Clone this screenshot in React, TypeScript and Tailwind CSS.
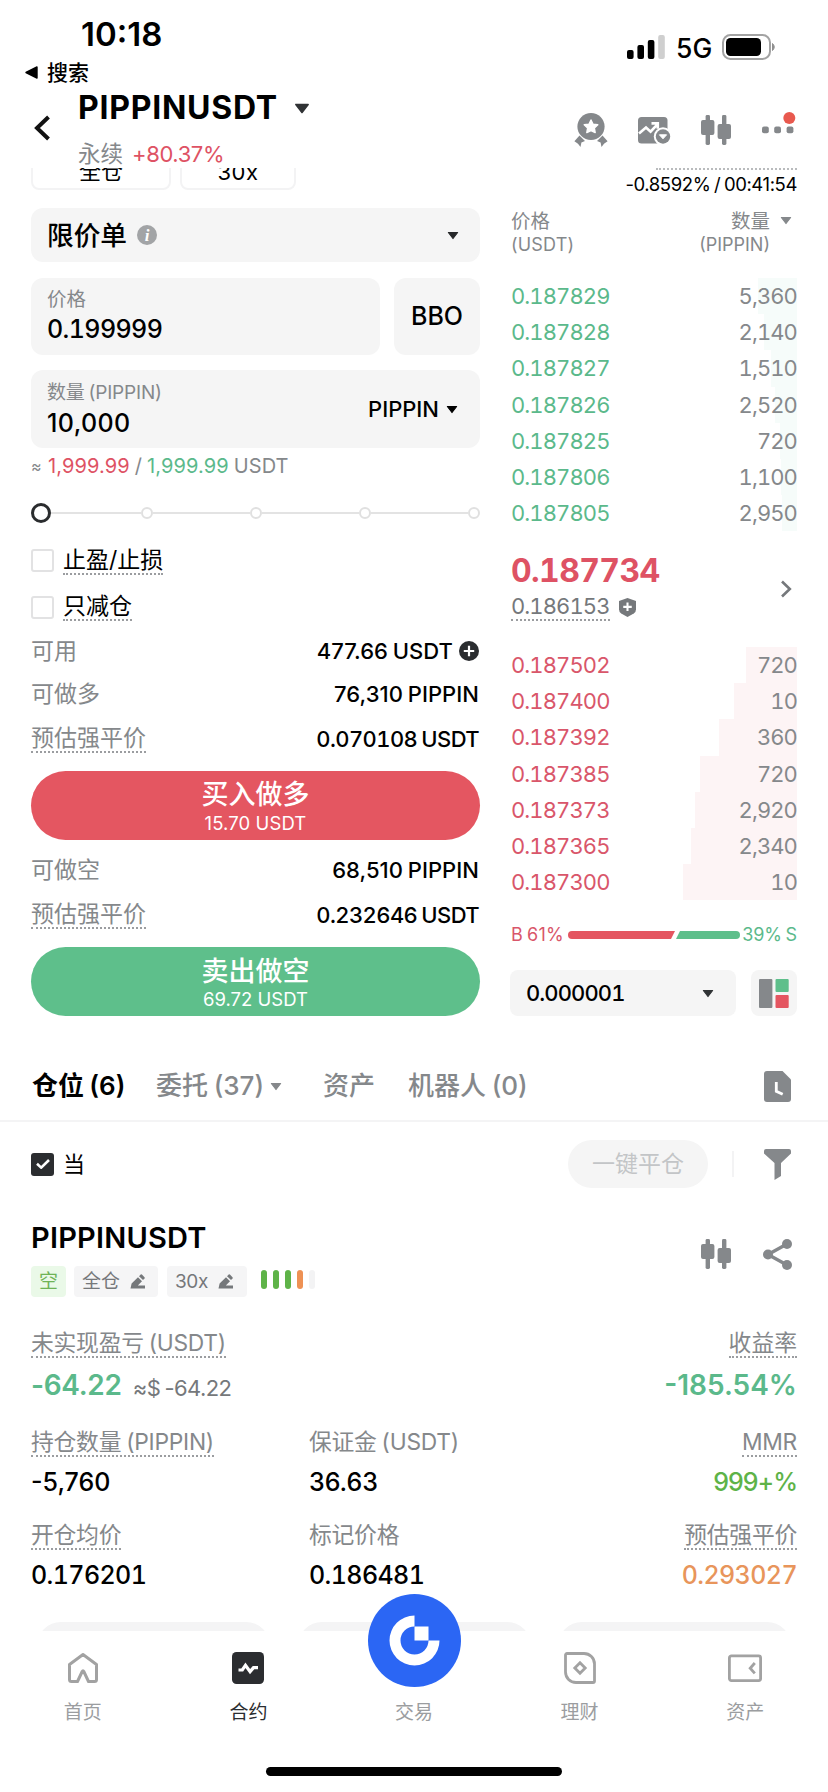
import type { ReactNode } from "react"
import clsx from "clsx"

type BookRow = { price: string; amount: string; depth: number }

const asks: BookRow[] = [
  { price: "0.187829", amount: "5,360", depth: 39 },
  { price: "0.187828", amount: "2,140", depth: 33 },
  { price: "0.187827", amount: "1,510", depth: 26 },
  { price: "0.187826", amount: "2,520", depth: 22 },
  { price: "0.187825", amount: "720", depth: 17 },
  { price: "0.187806", amount: "1,100", depth: 16 },
  { price: "0.187805", amount: "2,950", depth: 15 },
]

const bids: BookRow[] = [
  { price: "0.187502", amount: "720", depth: 51 },
  { price: "0.187400", amount: "10", depth: 63 },
  { price: "0.187392", amount: "360", depth: 78 },
  { price: "0.187385", amount: "720", depth: 97 },
  { price: "0.187373", amount: "2,920", depth: 102 },
  { price: "0.187365", amount: "2,340", depth: 106 },
  { price: "0.187300", amount: "10", depth: 114 },
]

function Caret({ className }: { className?: string }) {
  return (
    <svg viewBox="0 0 12 8" className={clsx("shrink-0", className)}>
      <path
        d="M1.4 1h9.2L6 7z"
        fill="currentColor"
        stroke="currentColor"
        strokeWidth="1.2"
        strokeLinejoin="round"
      />
    </svg>
  )
}

function Dotted({ children, className }: { children: ReactNode; className?: string }) {
  return (
    <span
      className={clsx(
        "inline-block border-b-2 border-dotted border-[#9b9da0] leading-[26px] whitespace-nowrap",
        className
      )}
    >
      {children}
    </span>
  )
}

function CandlesIcon() {
  return (
    <svg viewBox="0 0 30 30" className="h-[30px] w-[30px]" fill="#85888b">
      <rect x="4.6" y="0" width="4.4" height="30" rx="1.4" />
      <rect x="0" y="5" width="13.4" height="15" rx="2" />
      <rect x="21" y="0" width="4.4" height="30" rx="1.4" />
      <rect x="16.6" y="9" width="13.4" height="15" rx="2" />
    </svg>
  )
}

function EditIcon() {
  return (
    <svg viewBox="0 0 16 15" className="h-[15px] w-[16px]" fill="#75787b">
      <path d="M0.5 14.5L1.6 9.6 8 3.2l4 4-4.2 4.2H15v3.1z" />
      <path d="M9 2.2l1.7-1.6q.6-.5 1.2 0l2.6 2.6q.5.6 0 1.2L13 6.1z" />
    </svg>
  )
}

function StatusBar() {
  return (
    <div className="flex h-[88px] justify-between">
      <div className="flex flex-col">
        <span className="mt-[13px] ml-[81px] h-[43px] text-[33px] leading-[42px] font-semibold">
          10:18
        </span>
        <div className="ml-[25px] flex h-[32px] items-center gap-[9px]">
          <svg viewBox="0 0 13 13" className="h-[13px] w-[13px]">
            <path d="M12 1v11L1 6.5z" stroke="#000" strokeWidth="1.4" strokeLinejoin="round" />
          </svg>
          <span className="text-[21px] leading-none font-medium">搜索</span>
        </div>
      </div>
      <div className="mt-[34px] mr-[52px] flex h-[26px] items-center">
        <svg viewBox="0 0 38 24" className="h-[24px] w-[38px]">
          <rect x="0" y="15" width="6.6" height="9" rx="2" />
          <rect x="10.4" y="10" width="6.6" height="14" rx="2" />
          <rect x="20.8" y="5" width="6.6" height="19" rx="2" />
          <rect x="31.2" y="0" width="6.6" height="24" rx="2" fill="#cfcfcf" />
        </svg>
        <span className="ml-[11px] w-[46px] pt-[2px] text-[26.5px] leading-none font-medium">
          5G
        </span>
        <svg viewBox="0 0 54 26" className="h-[26px] w-[54px]">
          <rect x="1" y="1" width="47" height="24" rx="7.5" fill="none" stroke="#a3a3a3" strokeWidth="2" />
          <rect x="4" y="4" width="35" height="18" rx="4.5" />
          <path d="M50.5 9.5q3.5 3.5 0 7z" fill="#8f8f8f" stroke="#8f8f8f" />
        </svg>
      </div>
    </div>
  )
}

function Header() {
  return (
    <header className="flex h-[80px] justify-between">
      <div className="flex">
        <svg viewBox="0 0 18 26" className="mt-[27px] ml-[33px] h-[26px] w-[18px]">
          <path d="M15.5 2L4 13l11.5 11" fill="none" stroke="#111" strokeWidth="4" />
        </svg>
        <div className="ml-[27px]">
          <div className="flex h-[40px] items-center gap-[16px]">
            <h1 className="w-[200px] text-[32px] leading-none font-bold tracking-[0.75px]">
              PIPPINUSDT
            </h1>
            <Caret className="h-[11px] w-[16px] text-[#303335]" />
          </div>
          <div className="mt-[12px] flex h-[28px] items-center gap-[9px] text-[22px] leading-none">
            <span className="text-[22.5px] text-[#85888b]">永续</span>
            <span className="tracking-[-0.4px] text-[#de5264]">+80.37%</span>
          </div>
        </div>
      </div>

      <div className="flex">
        <svg viewBox="0 0 34 36" className="mt-[24px] mr-[30px] h-[36px] w-[34px]" fill="#85888b">
          <path d="M5.5 23.5L11 29l-3.6 1.6-.9 4.3-2.5-3.2-3.6-2.4zM28.5 23.5L23 29l3.6 1.6.9 4.3 2.5-3.2 3.6-2.4z" />
          <circle cx="17" cy="14.5" r="13.6" />
          <path
            d="M17 8l2.1 4.2 4.7.6-3.4 3.2.8 4.6-4.2-2.1-4.2 2.1.8-4.6-3.4-3.2 4.7-.6z"
            fill="#fff"
            stroke="#fff"
            strokeWidth="1.4"
            strokeLinejoin="round"
          />
        </svg>
        <svg viewBox="0 0 33 28" className="mt-[28px] mr-[30px] h-[28px] w-[33px]">
          <rect x="0" y="1" width="29.5" height="26.5" rx="3.5" fill="#85888b" />
          <path
            d="M1 17.5l7-6 4.6 4.2 6.8-7.4M13.5 7.4h6.3v5.4"
            fill="none"
            stroke="#fff"
            strokeWidth="2.6"
          />
          <circle cx="25" cy="20.5" r="9.2" fill="#fff" />
          <circle cx="25" cy="20.5" r="7.2" fill="#85888b" />
          <path d="M21.4 18.8h7.2L25 22.8z" fill="#fff" stroke="#fff" strokeLinejoin="round" />
        </svg>
        <div className="mt-[27px] mr-[31px]">
          <CandlesIcon />
        </div>
        <svg viewBox="0 0 34 24" className="mt-[24px] mr-[32px] h-[24px] w-[34px]" fill="#85888b">
          <rect x="0" y="14.5" width="6.8" height="6.8" rx="2" />
          <rect x="12.2" y="14.5" width="6.8" height="6.8" rx="2" />
          <rect x="24.6" y="14.5" width="6.8" height="6.8" rx="2" />
          <circle cx="27.3" cy="6" r="6" fill="#e8594e" />
        </svg>
      </div>
    </header>
  )
}

function InfoRow({
  label,
  value,
  price,
  plus,
  className,
}: {
  label: string
  value: string
  price?: boolean
  plus?: boolean
  className?: string
}) {
  return (
    <div className={clsx("flex items-center justify-between", className)}>
      {price ? (
        <Dotted className="text-[23px] text-[#85888b]">{label}</Dotted>
      ) : (
        <span className="text-[23px] leading-none text-[#85888b]">{label}</span>
      )}
      <span
        className={clsx(
          "flex items-center gap-[6px] pr-[1px] text-[22px] leading-none font-medium",
          price ? "tracking-[-0.6px] tabular-nums" : "tracking-[0.05px]"
        )}
      >
        {value}
        {plus && (
          <svg viewBox="0 0 20 20" className="h-[20px] w-[20px]">
            <circle cx="10" cy="10" r="10" fill="#2b2d30" />
            <path d="M10 4.8v10.4M4.8 10h10.4" stroke="#fff" strokeWidth="2.2" />
          </svg>
        )}
      </span>
    </div>
  )
}

function OrderForm() {
  return (
    <section className="w-[449px]">
      <div className="flex h-[22px] items-end gap-[9px] overflow-hidden text-[22px] leading-none">
        <div className="flex h-[42px] w-[140px] shrink-0 items-center justify-center rounded-[8px] border-2 border-[#f3f3f4]">
          <span className="pt-[4px]">全仓</span>
        </div>
        <div className="flex h-[42px] w-[116px] shrink-0 items-center justify-center rounded-[8px] border-2 border-[#f3f3f4]">
          <span className="pt-[5px] tracking-[0.5px]">30x</span>
        </div>
      </div>

      <div className="mt-[18px] flex h-[54px] items-center rounded-[12px] bg-[#f5f5f5] pr-[21px] pl-[16px]">
        <span className="text-[26.7px] leading-none font-medium">限价单</span>
        <span className="ml-[10px] flex h-[20px] w-[20px] items-center justify-center rounded-full bg-[#a2a4a6] font-['Liberation_Serif',serif] text-[17px] leading-none font-bold text-white italic">
          i
        </span>
        <Caret className="ml-auto h-[9px] w-[12px] text-[#26282a]" />
      </div>

      <div className="mt-[16px] flex gap-[14px]">
        <div className="flex h-[77px] w-[349px] flex-col rounded-[12px] bg-[#f5f5f5] pt-[7px] pl-[16px]">
          <span className="h-[28px] text-[19.5px] leading-[28px] text-[#85888b]">价格</span>
          <span className="h-[32px] text-[25px] leading-[32px] font-medium tracking-[-0.6px] tabular-nums">
            0.199999
          </span>
        </div>
        <div className="flex h-[77px] w-[86px] items-center justify-center rounded-[12px] bg-[#f5f5f5] text-[25px] font-medium">
          BBO
        </div>
      </div>

      <div className="mt-[15px] flex h-[78px] items-center justify-between rounded-[12px] bg-[#f5f5f5] pr-[22px] pl-[16px]">
        <div className="flex flex-col">
          <span className="h-[28px] text-[19px] leading-[28px] tracking-[-0.2px] text-[#85888b]">数量 (PIPPIN)</span>
          <span className="h-[32px] text-[25px] leading-[32px] font-medium tracking-[0.4px]">10,000</span>
        </div>
        <div className="flex items-center gap-[7px] text-[22px] leading-none font-medium">
          PIPPIN
          <Caret className="h-[9px] w-[12px]" />
        </div>
      </div>

      <p className="flex h-[36px] items-center gap-[5px] text-[20px] leading-none tracking-[0.1px] text-[#85888b]">
        <span className="w-[12px] text-[16px]">≈</span>
        <span className="text-[#de5264]">1,999.99</span>
        <span>/</span>
        <span className="text-[#5bb98b]">1,999.99</span>
        <span>USDT</span>
      </p>

      <div className="flex h-[58px] items-center">
        <i className="h-[20px] w-[20px] rounded-full border-[3px] border-[#2a2c2e]" />
        <i className="h-[2px] w-[90px] bg-[#e3e3e3]" />
        <i className="h-[12px] w-[12px] rounded-full border-2 border-[#e0e0e0]" />
        <i className="h-[2px] flex-1 bg-[#e3e3e3]" />
        <i className="h-[12px] w-[12px] rounded-full border-2 border-[#e0e0e0]" />
        <i className="h-[2px] flex-1 bg-[#e3e3e3]" />
        <i className="h-[12px] w-[12px] rounded-full border-2 border-[#e0e0e0]" />
        <i className="h-[2px] flex-1 bg-[#e3e3e3]" />
        <i className="h-[12px] w-[12px] rounded-full border-2 border-[#e0e0e0]" />
      </div>

      <label className="flex h-[37px] items-center gap-[9px]">
        <span className="h-[23px] w-[23px] rounded-[3px] border-2 border-[#e2e2e3]" />
        <Dotted className="text-[23px]">止盈/止损</Dotted>
      </label>
      <label className="flex h-[56px] items-center gap-[9px]">
        <span className="h-[23px] w-[23px] rounded-[3px] border-2 border-[#e2e2e3]" />
        <Dotted className="text-[23px]">只减仓</Dotted>
      </label>

      <InfoRow label="可用" value="477.66 USDT" plus className="h-[32px]" />
      <InfoRow label="可做多" value="76,310 PIPPIN" className="h-[54px]" />
      <InfoRow label="预估强平价" value="0.070108 USDT" price className="h-[36px]" />

      <button className="mt-[14px] flex h-[69px] w-full flex-col items-center rounded-full bg-[#e45661] pt-[8px] text-white">
        <span className="h-[32px] text-[27px] leading-[32px] font-medium">买入做多</span>
        <span className="h-[24px] text-[18.5px] leading-[24px] tracking-[0.1px]">15.70 USDT</span>
      </button>

      <InfoRow label="可做空" value="68,510 PIPPIN" className="h-[60px]" />
      <InfoRow label="预估强平价" value="0.232646 USDT" price className="h-[30px]" />

      <button className="mt-[17px] flex h-[69px] w-full flex-col items-center rounded-full bg-[#5ebf8b] pt-[9px] text-white">
        <span className="h-[31px] text-[27px] leading-[31px] font-medium">卖出做空</span>
        <span className="h-[24px] text-[18.5px] leading-[24px]">69.72 USDT</span>
      </button>
    </section>
  )
}

function Book({ rows, side }: { rows: BookRow[]; side: "ask" | "bid" }) {
  return (
    <ul className="h-[253px]">
      {rows.map((row) => (
        <li
          key={row.price}
          className="flex h-[36.2px] items-center justify-between text-[22px] leading-none tracking-[-0.9px] tabular-nums"
        >
          <span className={side === "ask" ? "text-[#5bb98b]" : "text-[#d9566a]"}>{row.price}</span>
          <span
            className={clsx(
              "flex h-full items-center justify-end text-[#85888b]",
              side === "ask" ? "bg-[#f6fcfa]" : "bg-[#fdf4f5]"
            )}
            style={{ width: row.depth }}
          >
            {row.amount}
          </span>
        </li>
      ))}
    </ul>
  )
}

function OrderBook() {
  return (
    <section className="ml-[31px] w-[286px]">
      <div className="ml-auto w-[141px] border-t-2 border-dotted border-[#b9bbbd]" />
      <div className="flex h-[29px] items-center justify-end text-[18.5px] leading-none tracking-[-0.4px] whitespace-nowrap">
        -0.8592% / 00:41:54
      </div>
      <div className="mt-[11px] flex h-[46px] justify-between text-[18px] text-[#85888b]">
        <div className="flex flex-col leading-[23px]">
          <span className="text-[19.5px]">价格</span>
          <span className="tracking-[0.2px]">(USDT)</span>
        </div>
        <div className="flex">
          <div className="flex flex-col text-right leading-[23px]">
            <span className="text-[19.5px]">数量</span>
            <span>(PIPPIN)</span>
          </div>
          <Caret className="mt-[6px] mr-[5px] ml-[10px] h-[9px] w-[12px]" />
        </div>
      </div>

      <div className="mt-[22px]">
        <Book rows={asks} side="ask" />
      </div>

      <div className="flex h-[116px] items-center justify-between pr-[5px]">
        <div>
          <div className="h-[36px] text-[32px] leading-[36px] font-bold tracking-[-0.6px] text-[#de5264] tabular-nums">
            0.187734
          </div>
          <div className="flex h-[37px] items-center gap-[9px]">
            <Dotted className="text-[22px] tracking-[-0.9px] text-[#75787b] tabular-nums">0.186153</Dotted>
            <svg viewBox="0 0 18 20" className="h-[19px] w-[17px]">
              <path d="M9 0l9 3.2v8.6q0 3-2.4 4.6L9 20l-6.6-3.6Q0 14.8 0 11.8V3.2z" fill="#75787b" />
              <path d="M9 4.8v9M4.5 9.3h9" stroke="#fff" strokeWidth="2.2" />
            </svg>
          </div>
        </div>
        <svg viewBox="0 0 12 18" className="h-[18px] w-[12px]">
          <path d="M2 1.5L9.8 9 2 16.5" fill="none" stroke="#75787b" strokeWidth="2.6" />
        </svg>
      </div>

      <Book rows={bids} side="bid" />

      <div className="mt-[17px] flex h-[36px] items-center text-[18px] leading-none whitespace-nowrap">
        <span className="w-[57px] tracking-[0.2px] text-[#d9566a]">B 61%</span>
        <svg viewBox="0 0 172 8" className="h-[8px] w-[172px]">
          <path d="M4 0h103l-4 8H4a4 4 0 010-8z" fill="#e45661" />
          <path d="M112 0h56a4 4 0 010 8h-60z" fill="#5ebf8b" />
        </svg>
        <span className="ml-auto tracking-[-0.1px] text-[#5bb98b]">39% S</span>
      </div>

      <div className="mt-[17px] flex justify-between">
        <div className="-ml-px flex h-[46px] w-[226px] items-center justify-between rounded-[8px] bg-[#f5f5f5] pr-[22px] pl-[16px] text-[22px] font-medium tracking-[-0.9px] tabular-nums">
          0.000001
          <Caret className="h-[9px] w-[12px] text-[#303335]" />
        </div>
        <div className="flex h-[46px] w-[46px] items-center justify-center rounded-[8px] bg-[#f5f5f5]">
          <svg viewBox="0 0 30 29" className="h-[29px] w-[30px]">
            <rect width="13.4" height="29" rx="1" fill="#85888b" />
            <rect x="16.5" width="13.2" height="13" rx="1" fill="#5ebf8b" />
            <rect x="16.5" y="16" width="13.2" height="13" rx="1" fill="#e45661" />
          </svg>
        </div>
      </div>
    </section>
  )
}

function Tabs() {
  return (
    <nav className="mt-[36px] flex h-[70px] items-center border-b-2 border-[#f4f4f5] pr-[37px] pl-[32px] text-[26px] leading-none font-medium text-[#85888b]">
      <span className="w-[124px] font-semibold text-black">仓位 (6)</span>
      <span className="flex w-[167px] items-center gap-[6px]">
        委托 (37)
        <Caret className="h-[9px] w-[12px]" />
      </span>
      <span className="w-[85px]">资产</span>
      <span>机器人 (0)</span>
      <svg viewBox="0 0 27 31" className="ml-auto h-[31px] w-[27px]">
        <path d="M3 0h15.5L27 8.5V28a3 3 0 01-3 3H3a3 3 0 01-3-3V3a3 3 0 013-3z" fill="#85888b" />
        <path d="M12.3 11v9.3l6.4 3" fill="none" stroke="#fff" strokeWidth="2.8" />
      </svg>
    </nav>
  )
}

function Stat({
  label,
  value,
  dotted,
  right,
  className,
}: {
  label: string
  value: string
  dotted?: boolean
  right?: boolean
  className?: string
}) {
  return (
    <div className={right ? "flex-1 text-right" : "w-[278px]"}>
      <div className="h-[28px] text-[#85888b]">
        <Dotted className={clsx("text-[22.8px] tracking-[-0.25px]", !dotted && "border-transparent")}>
          {label}
        </Dotted>
      </div>
      <div className={clsx("mt-[7px] h-[36px] text-[25px] leading-[36px] font-medium", className)}>
        {value}
      </div>
    </div>
  )
}

function Position() {
  return (
    <section className="pr-[31px] pl-[31px]">
      <div className="flex h-[84px] items-center">
        <span className="flex h-[23px] w-[23px] items-center justify-center rounded-[3px] bg-[#2b2d30]">
          <svg viewBox="0 0 14 10" className="h-[10px] w-[14px]">
            <path d="M1 4.8l4.2 3.8L13 1" fill="none" stroke="#fff" strokeWidth="2.6" />
          </svg>
        </span>
        <span className="ml-[9px] text-[22px] leading-none">当</span>
        <span className="ml-auto flex h-[48px] w-[140px] items-center justify-center rounded-full bg-[#f5f5f5] text-[23px] text-[#c3c5c7]">
          一键平仓
        </span>
        <span className="mr-[30px] ml-[24px] h-[26px] w-[2px] bg-[#f3f3f4]" />
        <svg viewBox="0 0 27 31" className="mr-[6px] h-[31px] w-[27px]">
          <path d="M2 0h23a2 2 0 012 2v2.5L17 14v13l-6.500 4V14L0 4.500V2a2 2 0 012-2z" fill="#85888b" />
        </svg>
      </div>

      <div className="flex h-[97px] items-center justify-between">
        <div className="h-full pt-[10px]">
          <h2 className="h-[44px] text-[29px] leading-[44px] font-semibold tracking-[0.2px]">PIPPINUSDT</h2>
          <div className="mt-[6px] flex h-[31px] text-[19px] leading-none text-[#75787b]">
            <span className="flex w-[35px] items-center justify-center rounded-[4px] bg-[#eaf9e8] text-[#6fb356]">
              空
            </span>
            <span className="ml-[8px] flex w-[84px] items-center gap-[10px] rounded-[4px] bg-[#f5f5f6] pl-[8px]">
              全仓 <EditIcon />
            </span>
            <span className="ml-[9px] flex w-[80px] items-center gap-[10px] rounded-[4px] bg-[#f5f5f6] pl-[8px] tracking-[-0.4px]">
              30x <EditIcon />
            </span>
            <span className="mt-[4px] ml-[14px] flex gap-[6px]">
              <i className="h-[19px] w-[6px] rounded-full bg-[#5eb348]" />
              <i className="h-[19px] w-[6px] rounded-full bg-[#5eb348]" />
              <i className="h-[19px] w-[6px] rounded-full bg-[#5eb348]" />
              <i className="h-[19px] w-[6px] rounded-full bg-[#ee9154]" />
              <i className="h-[19px] w-[6px] rounded-full bg-[#f3f3f4]" />
            </span>
          </div>
        </div>
        <div className="flex gap-[32px] pr-[5px]">
          <CandlesIcon />
          <svg viewBox="0 0 29 31" className="h-[31px] w-[29px]" fill="#85888b">
            <path d="M24 5L5 15.5 24 26" fill="none" stroke="#85888b" strokeWidth="3.4" />
            <circle cx="24" cy="5" r="5" />
            <circle cx="5" cy="15.5" r="5" />
            <circle cx="24" cy="26" r="5" />
          </svg>
        </div>
      </div>

      <div className="flex justify-between pt-[27px]">
        <div>
          <div className="h-[28px] text-[#85888b]">
            <Dotted className="text-[22.8px] tracking-[-0.25px]">未实现盈亏 (USDT)</Dotted>
          </div>
          <div className="mt-[9px] flex h-[36px] items-center gap-[11px] leading-none">
            <span className="text-[28px] font-semibold tracking-[-0.3px] text-[#5bb98b]">-64.22</span>
            <span className="pt-[5px] text-[22px] tracking-[-0.6px] text-[#75787b]">≈$ -64.22</span>
          </div>
        </div>
        <div className="text-right">
          <div className="h-[28px] text-[#85888b]">
            <Dotted className="text-[22.8px]">收益率</Dotted>
          </div>
          <div className="mt-[9px] h-[36px] text-[28px] leading-[36px] font-semibold text-[#5bb98b]">
            -185.54%
          </div>
        </div>
      </div>

      <div className="mt-[26px] flex">
        <Stat label="持仓数量 (PIPPIN)" value="-5,760" dotted />
        <Stat label="保证金 (USDT)" value="36.63" />
        <Stat label="MMR" value="999+%" dotted right className="tracking-[-1px] text-[#5eb348]" />
      </div>
      <div className="mt-[22px] flex">
        <Stat label="开仓均价" value="0.176201" dotted className="tracking-[-0.6px] tabular-nums" />
        <Stat label="标记价格" value="0.186481" className="tracking-[-0.6px] tabular-nums" />
        <Stat
          label="预估强平价"
          value="0.293027"
          dotted
          right
          className="tracking-[-0.6px] text-[#e8955b] tabular-nums"
        />
      </div>

      {/* action buttons, cut off by the tab bar */}
      <div className="mt-[29px] flex h-[9px] justify-between overflow-hidden px-[6px]">
        <span className="h-[48px] w-[233px] rounded-full bg-[#f4f4f5]" />
        <span className="h-[48px] w-[233px] rounded-full bg-[#f4f4f5]" />
        <span className="h-[48px] w-[233px] rounded-full bg-[#f4f4f5]" />
      </div>
    </section>
  )
}

function BottomNav() {
  return (
    <footer className="h-[161px] bg-white">
      <div className="relative flex h-[100px] text-[19px] leading-none text-[#9b9da0]">
        <div className="flex flex-1 flex-col items-center">
          <svg viewBox="0 0 32 32" className="mt-[21px] h-[32px] w-[32px]">
            <path
              d="M16 2.5L29.5 12.5V27.5a2 2 0 01-2 2H21.5L16.8 19.5q-.8-1.5-1.6 0L10.5 29.5H4.5a2 2 0 01-2-2V12.5z"
              fill="none"
              stroke="#a2a2a2"
              strokeWidth="3"
              strokeLinejoin="round"
            />
          </svg>
          <span className="mt-[19px]">首页</span>
        </div>
        <div className="flex flex-1 flex-col items-center">
          <svg viewBox="0 0 32 32" className="mt-[21px] h-[32px] w-[32px]">
            <rect width="32" height="32" rx="4.5" fill="#2b2d30" />
            <path
              d="M6.5 18h3.8l3.2-4.8 4.6 6.4 3.4-4H26"
              fill="none"
              stroke="#fff"
              strokeWidth="3.2"
            />
          </svg>
          <span className="mt-[19px] text-[#2b2d30]">合约</span>
        </div>
        <div className="flex flex-1 flex-col items-center">
          <span className="mt-[72px]">交易</span>
        </div>
        <div className="flex flex-1 flex-col items-center">
          <svg viewBox="0 0 32 32" className="mt-[21px] h-[32px] w-[32px]">
            <path
              d="M3 1.5h17A10.5 10.5 0 0130.5 12v17a1.5 1.5 0 01-1.5 1.5H12A10.5 10.5 0 011.5 20V3A1.5 1.5 0 013 1.5zM16 10.8l5.2 5.2-5.2 5.2-5.2-5.2z"
              fill="none"
              stroke="#a2a2a2"
              strokeWidth="2.8"
            />
          </svg>
          <span className="mt-[19px]">理财</span>
        </div>
        <div className="flex flex-1 flex-col items-center">
          <svg viewBox="0 0 34 32" className="mt-[21px] h-[32px] w-[34px]">
            <rect x="1.4" y="3.9" width="31.2" height="24.7" rx="2" fill="none" stroke="#a2a2a2" strokeWidth="2.8" />
            <path d="M26.8 11l-4.6 5.2 4.6 5.2" fill="none" stroke="#a2a2a2" strokeWidth="2.8" />
          </svg>
          <span className="mt-[19px]">资产</span>
        </div>

        <svg viewBox="0 0 93 93" className="absolute -top-[37px] left-[367.5px] h-[93px] w-[93px]">
          <circle cx="46.5" cy="46.5" r="46.5" fill="#2b66f4" />
          <path d="M46.5 21.5A25 25 0 1071.5 46.5H60.5A14 14 0 1146.5 32.5z" fill="#fff" />
          <rect x="46.5" y="32.5" width="14" height="14" fill="#fff" />
        </svg>
      </div>
      <div className="mx-auto mt-[36px] h-[9px] w-[296px] rounded-full bg-black" />
    </footer>
  )
}

export default function App() {
  return (
    <div className="flex h-[1792px] w-[828px] flex-col overflow-hidden bg-white font-['Inter','Noto_Sans_CJK_SC',sans-serif] text-black [word-spacing:-1.2px]">
      <StatusBar />
      <Header />
      <main className="h-[1463px]">
        <div className="flex pl-[31px]">
          <OrderForm />
          <OrderBook />
        </div>
        <Tabs />
        <Position />
      </main>
      <BottomNav />
    </div>
  )
}
